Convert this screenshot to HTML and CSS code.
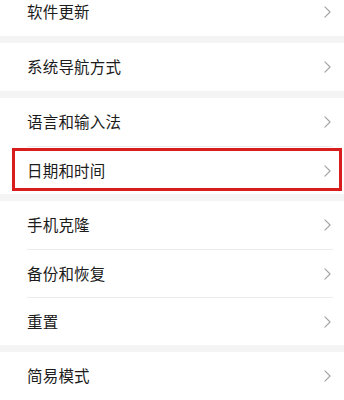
FILE: index.html
```html
<!DOCTYPE html>
<html lang="zh-CN">
<head>
<meta charset="utf-8">
<title>系统和更新</title>
<link rel="stylesheet" href="styles.css">
</head>
<body>
<div class="list">
  <div class="group">
    <div class="row"><div class="inner"><span class="label">软件更新</span><svg class="chev" viewBox="0 0 8 14"><path d="M1 1 L7 7 L1 13"/></svg></div></div>
  </div>
  <div class="group">
    <div class="row"><div class="inner"><span class="label">系统导航方式</span><svg class="chev" viewBox="0 0 8 14"><path d="M1 1 L7 7 L1 13"/></svg></div></div>
  </div>
  <div class="group">
    <div class="row"><div class="inner"><span class="label">语言和输入法</span><svg class="chev" viewBox="0 0 8 14"><path d="M1 1 L7 7 L1 13"/></svg></div></div>
    <div class="row marked"><div class="inner"><span class="label">日期和时间</span><svg class="chev" viewBox="0 0 8 14"><path d="M1 1 L7 7 L1 13"/></svg></div></div>
  </div>
  <div class="group">
    <div class="row"><div class="inner"><span class="label">手机克隆</span><svg class="chev" viewBox="0 0 8 14"><path d="M1 1 L7 7 L1 13"/></svg></div></div>
    <div class="row"><div class="inner"><span class="label">备份和恢复</span><svg class="chev" viewBox="0 0 8 14"><path d="M1 1 L7 7 L1 13"/></svg></div></div>
    <div class="row"><div class="inner"><span class="label">重置</span><svg class="chev" viewBox="0 0 8 14"><path d="M1 1 L7 7 L1 13"/></svg></div></div>
  </div>
  <div class="group">
    <div class="row"><div class="inner"><span class="label">简易模式</span><svg class="chev" viewBox="0 0 8 14"><path d="M1 1 L7 7 L1 13"/></svg></div></div>
  </div>
</div>
</body>
</html>
```
FILE: styles.css
```css
html, body {
  margin: 0;
  padding: 0;
  height: 400px;
  overflow: hidden;
  background: #f4f4f4;
}
body {
  font-family: "Noto Sans CJK SC", "Noto Sans", sans-serif;
  color: #1c1c1c;
}
.list {
  margin-top: -12px;
  display: flex;
  flex-direction: column;
  gap: 7px;
}
.group {
  background: #ffffff;
  display: flex;
  flex-direction: column;
}
.row {
  position: relative;
  height: 48px;
  padding: 0 11px 0 27px;
  box-sizing: border-box;
  display: flex;
}
.inner {
  flex: 1;
  display: flex;
  align-items: center;
  justify-content: space-between;
}
.row + .row .inner {
  border-top: 1px solid #ececec;
}
.label {
  font-size: 15.5px;
  line-height: 1;
  letter-spacing: 0.2px;
}
.chev {
  width: 7px;
  height: 12px;
  margin-right: 2px;
  fill: none;
  stroke: #a3a3a3;
  stroke-width: 1.3;
  stroke-linecap: round;
  stroke-linejoin: round;
}
.marked::after {
  content: "";
  position: absolute;
  top: 2px;
  bottom: 3px;
  left: 12px;
  right: 2px;
  border: 3px solid #d91c1c;
}
```
